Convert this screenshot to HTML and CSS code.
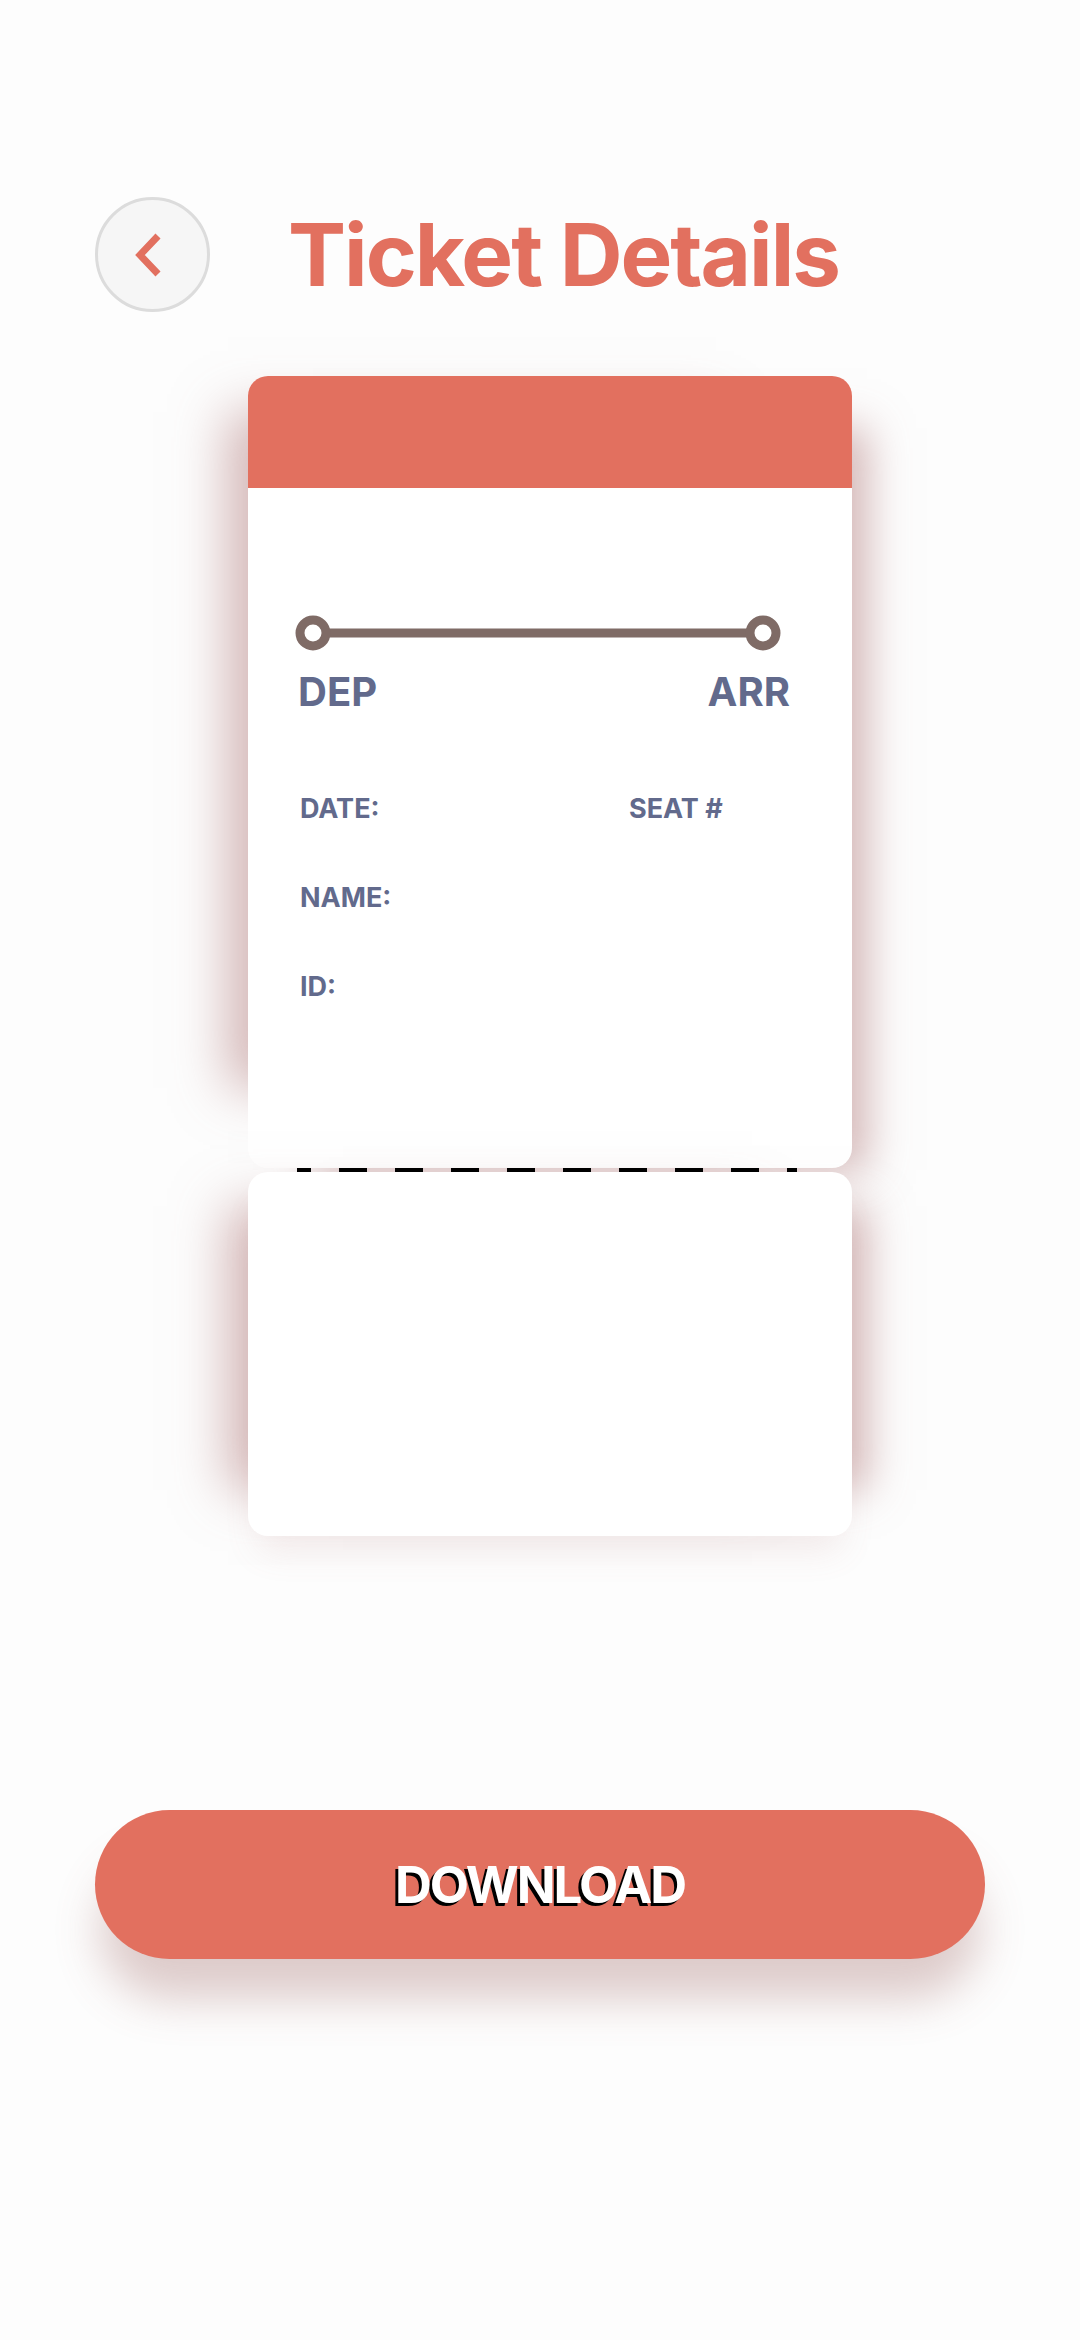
FILE: index.html
```html
<!DOCTYPE html>
<html lang="en">
<head>
<meta charset="utf-8">
<title>Ticket Details</title>
<link rel="stylesheet" href="styles.css">
</head>
<body>
<div class="screen">
  <header class="top">
    <button class="back" aria-label="Back">
      <svg width="40" height="56" viewBox="0 0 40 56"><polyline points="27,9 9,28 27,47" fill="none" stroke="#e2705f" stroke-width="7" stroke-linejoin="miter"/></svg>
    </button>
    <h1 class="title">Ticket Details</h1>
  </header>

  <section class="ticket">
    <div class="card main">
      <div class="card-head"></div>
      <div class="card-body">
        <svg class="route" width="488" height="38" viewBox="0 0 488 38">
          <line x1="30" y1="19" x2="458" y2="19" stroke="#7f6b66" stroke-width="9"/>
          <circle cx="19" cy="19" r="13" fill="#fff" stroke="#7f6b66" stroke-width="9"/>
          <circle cx="469" cy="19" r="13" fill="#fff" stroke="#7f6b66" stroke-width="9"/>
        </svg>
        <div class="ends"><span>DEP</span><span>ARR</span></div>
        <div class="info">
          <span class="lbl">DATE:</span><span class="lbl">SEAT #</span>
          <span class="lbl">NAME:</span><span></span>
          <span class="lbl">ID:</span><span></span>
        </div>
      </div>
    </div>
    <div class="tear">
      <svg width="500" height="4" viewBox="0 0 500 4"><line x1="0" y1="2" x2="500" y2="2" stroke="#000" stroke-width="4" stroke-dasharray="28 28" stroke-dashoffset="14"/></svg>
    </div>
    <div class="card stub"></div>
  </section>

  <div class="actions">
    <button class="download">DOWNLOAD</button>
  </div>
</div>
</body>
</html>
```

FILE: styles.css
```css
* { box-sizing: border-box; }
html, body {
  margin: 0;
  padding: 0;
  background: #fdfdfd;
  font-family: Inter, "Noto Sans", sans-serif;
}
.screen {
  width: 1080px;
  height: 2340px;
  overflow: hidden;
}
.top {
  display: flex;
  align-items: center;
  gap: 78px;
  padding: 197px 0 0 95px;
}
.back {
  width: 115px;
  height: 115px;
  border-radius: 50%;
  border: 3px solid #dcdcdc;
  background: #f6f6f6;
  display: flex;
  align-items: center;
  justify-content: center;
  padding: 0 4px 0 0;
  margin: 0;
}
.back svg { display: block; }
.title {
  margin: 0;
  font-size: 87px;
  font-weight: 700;
  letter-spacing: -2px;
  color: #e2705f;
  line-height: 1;
}
.ticket {
  width: 604px;
  margin: 64px 0 0 248px;
}
.card {
  background: #fff;
  border-radius: 20px;
}
.main {
  height: 792px;
  overflow: hidden;
  box-shadow:
    -78px -22px 50px -58px rgba(170, 110, 110, 0.5),
    40px 27px 40px -25px rgba(170, 110, 110, 0.5);
}
.card-head {
  height: 112px;
  background: #e2705f;
}
.card-body {
  padding: 126px 64px 0 52px;
}
.route { display: block; margin-left: -6px; }
.ends {
  display: flex;
  justify-content: space-between;
  margin-top: 16px;
  margin-left: -2px;
  margin-right: -2px;
  font-size: 40px;
  font-weight: 700;
  color: #626a8c;
  line-height: 48px;
}
.info {
  display: grid;
  grid-template-columns: 329px 1fr;
  row-gap: 55px;
  margin-top: 76px;
  font-size: 27px;
  font-weight: 700;
  color: #626a8c;
  line-height: 34px;
}
.tear {
  height: 4px;
  padding-left: 49px;
}
.tear svg { display: block; }
.stub {
  height: 364px;
  box-shadow:
    -60px -6px 50px -40px rgba(170, 110, 110, 0.5),
    55px -6px 40px -40px rgba(170, 110, 110, 0.5),
    0 25px 35px -10px rgba(170, 110, 110, 0.12);
}
.actions {
  padding: 274px 95px 0;
}
.download {
  width: 890px;
  height: 149px;
  border: none;
  border-radius: 75px;
  background: #e2705f;
  color: #fff;
  font-family: Inter, "Noto Sans", sans-serif;
  font-size: 51px;
  font-weight: 700;
  letter-spacing: -2px;
  text-shadow: -3px 3px 0 #000;
  box-shadow: 0 45px 45px -5px rgba(150, 90, 85, 0.3);
  margin: 0;
}
```
